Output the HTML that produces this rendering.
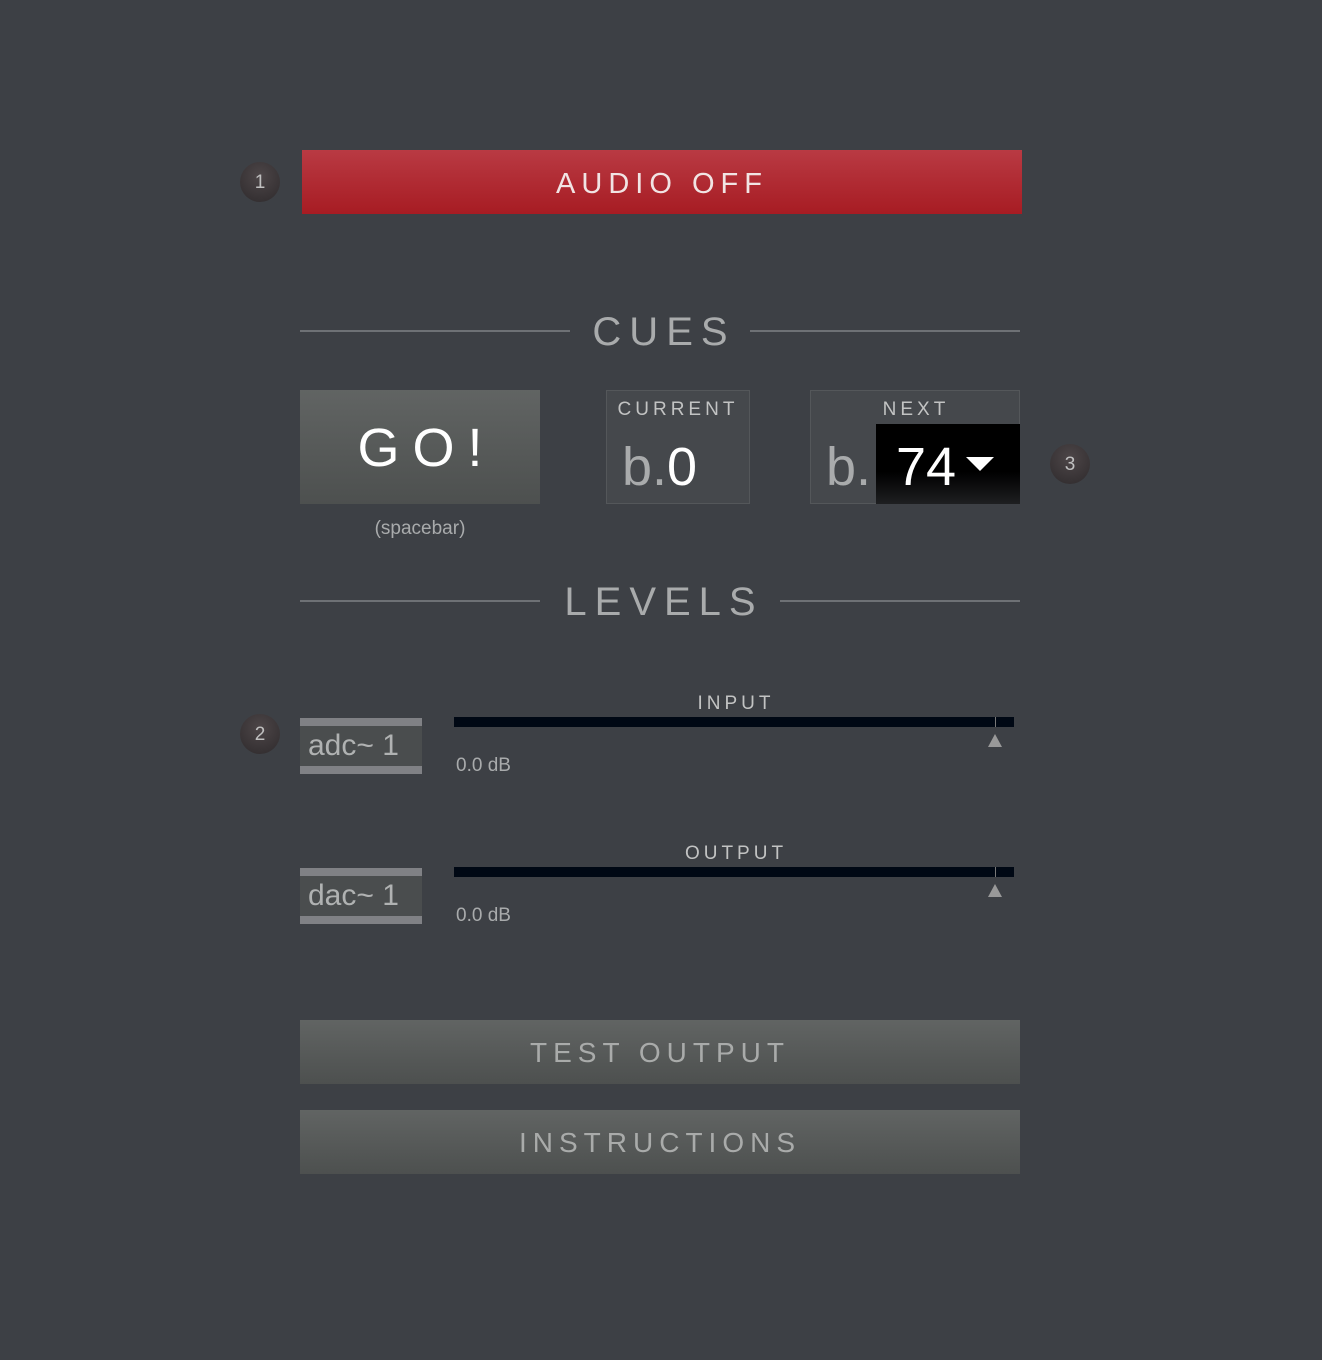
<!DOCTYPE html>
<html><head><style>
body{margin:0;width:1322px;height:1360px;background:#3d4045;font-family:"Liberation Sans",sans-serif;position:relative;overflow:hidden}
.a{position:absolute}
.badge{position:absolute;width:40px;height:40px;border-radius:50%;background:radial-gradient(circle at 50% 35%,#4d4648,#2e2a2c);color:#c0c0c0;font-size:19px;line-height:42px;text-align:center}
.line{position:absolute;height:2px;background:#6e7175}
.h{position:absolute;color:#a9abac;letter-spacing:8px;font-size:40px;text-align:center}
.btn{position:absolute;left:300px;width:720px;height:64px;background:linear-gradient(#616463,#4d504f);color:#a9abaa;font-size:28px;letter-spacing:6px;text-align:center;line-height:66px}
.lbl{position:absolute;color:#c2c3c3;font-size:19px;letter-spacing:4px;text-align:center}
.box{position:absolute;left:300px;width:122px;height:56px;background:#4a4d4e}
.box::before,.box::after{content:"";position:absolute;left:0;width:122px;height:8px;background:#808185}
.box::before{top:0}.box::after{bottom:0}
.box span{position:absolute;left:8px;top:11px;color:#b0b2b2;font-size:30px}
.meter{position:absolute;left:454px;width:560px;height:10px;background:#000814}
.tick{position:absolute;width:1px;height:10px;background:#777}
.tri{position:absolute;width:0;height:0;border-left:7px solid transparent;border-right:7px solid transparent;border-bottom:13px solid #999}
.db{position:absolute;left:456px;color:#a9abac;font-size:19px}
</style></head><body>
<div class="badge" style="left:240px;top:162px">1</div>
<div class="a" style="left:302px;top:150px;width:720px;height:64px;background:linear-gradient(#b93a43,#a71c23);color:#f1e4e4;font-size:29px;letter-spacing:6px;text-align:center;line-height:68px">AUDIO OFF</div>

<div class="line" style="left:300px;top:330px;width:270px"></div>
<div class="line" style="left:750px;top:330px;width:270px"></div>
<div class="h" style="left:574px;top:310px;width:180px">CUES</div>

<div class="a" style="left:300px;top:390px;width:240px;height:114px;background:linear-gradient(#616463,#4d504f);color:#fff;font-size:54px;letter-spacing:13px;text-align:center;line-height:116px;text-indent:13px">GO!</div>
<div class="a" style="left:300px;top:518px;width:240px;text-align:center;color:#a9abac;font-size:19px">(spacebar)</div>

<div class="a" style="left:606px;top:390px;width:142px;height:112px;border:1px solid #54575a;background:#45484c"></div>
<div class="lbl" style="left:606px;top:399px;width:144px">CURRENT</div>
<div class="a" style="left:622px;top:436px;font-size:54px;color:#a9abac">b.<span style="color:#fff">0</span></div>

<div class="a" style="left:810px;top:390px;width:208px;height:112px;border:1px solid #54575a;background:#45484c"></div>
<div class="lbl" style="left:876px;top:399px;width:80px">NEXT</div>
<div class="a" style="left:826px;top:436px;font-size:54px;color:#a9abac">b.</div>
<div class="a" style="left:876px;top:424px;width:144px;height:80px;background:linear-gradient(#000 60%,#1e1f21)"></div>
<div class="a" style="left:896px;top:436px;font-size:54px;color:#fff">74</div>
<div class="a" style="left:966px;top:457px;width:0;height:0;border-left:14px solid transparent;border-right:14px solid transparent;border-top:14px solid #fff"></div>
<div class="badge" style="left:1050px;top:444px">3</div>

<div class="line" style="left:300px;top:600px;width:240px"></div>
<div class="line" style="left:780px;top:600px;width:240px"></div>
<div class="h" style="left:544px;top:580px;width:240px">LEVELS</div>

<div class="lbl" style="left:654px;top:693px;width:164px">INPUT</div>
<div class="badge" style="left:240px;top:714px">2</div>
<div class="box" style="top:718px"><span>adc~ 1</span></div>
<div class="meter" style="top:717px"></div>
<div class="tick" style="left:995px;top:717px"></div>
<div class="tri" style="left:988px;top:734px"></div>
<div class="db" style="top:755px">0.0 dB</div>

<div class="lbl" style="left:654px;top:843px;width:164px">OUTPUT</div>
<div class="box" style="top:868px"><span>dac~ 1</span></div>
<div class="meter" style="top:867px"></div>
<div class="tick" style="left:995px;top:867px"></div>
<div class="tri" style="left:988px;top:884px"></div>
<div class="db" style="top:905px">0.0 dB</div>

<div class="btn" style="top:1020px">TEST OUTPUT</div>
<div class="btn" style="top:1110px">INSTRUCTIONS</div>
</body></html>
